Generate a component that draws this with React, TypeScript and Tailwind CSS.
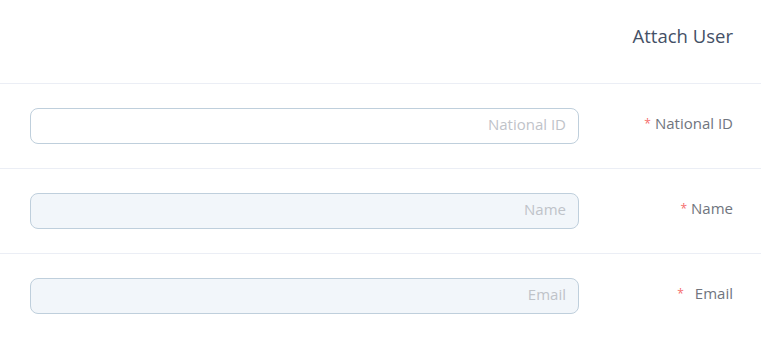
import React from "react";

const font = { fontFamily: '"Open Sans", "Noto Sans", sans-serif' };

function Row({
  label,
  placeholder,
  disabled,
  gap,
}: {
  label: string;
  placeholder: string;
  disabled?: boolean;
  gap?: boolean;
}) {
  return (
    <div className="flex items-center border-b border-[#ebeef5] py-6">
      <div className="pl-[30px] w-[579px]">
        <input
          placeholder={placeholder}
          disabled={disabled}
          dir="rtl"
          className={`h-9 w-full rounded-lg border border-[#bfcfdc] px-3 pb-[5px] text-[15px] text-[#606266] outline-none placeholder:text-[#bfc3c9] ${
            disabled ? "bg-[#f2f6fa]" : "bg-white"
          }`}
        />
      </div>
      <div className="flex-1 flex items-center justify-end pr-[28px] pb-[6px] text-[15px] leading-[20px] text-[#70757e]">
        <span className="text-[#f56c6c] text-[12px] mr-[4px] pt-[1px]">*</span>
        {gap && <span className="w-[7px]" />}
        <span>{label}</span>
      </div>
    </div>
  );
}

export default function App() {
  return (
    <div className="w-[761px] h-[337px] bg-white overflow-hidden" style={font}>
      <div className="h-[84px] border-b border-[#ebeef5] flex justify-end pr-[28px] pt-[22px]">
        <span className="text-[18.5px] leading-[28px] text-[#445066]">Attach User</span>
      </div>
      <Row label="National ID" placeholder="National ID" />
      <Row label="Name" placeholder="Name" disabled />
      <Row label="Email" placeholder="Email" disabled gap />
    </div>
  );
}
